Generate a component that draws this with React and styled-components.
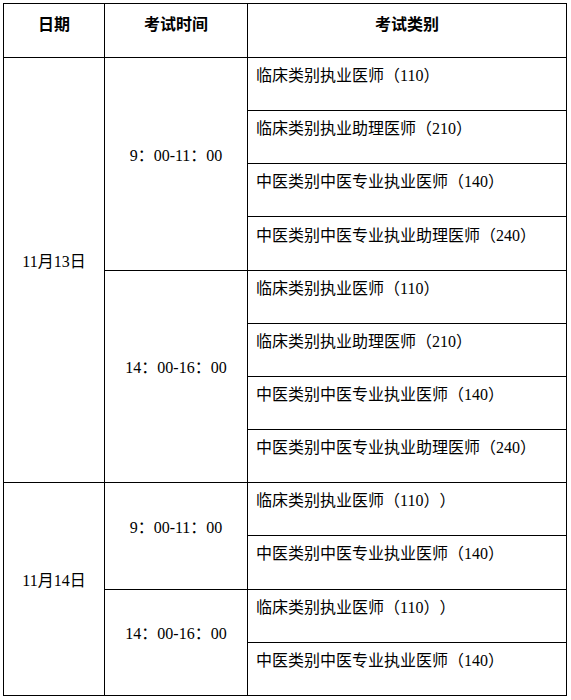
import React from 'react';
import styled, { createGlobalStyle } from 'styled-components';

const GlobalStyle = createGlobalStyle`
  html, body {
    margin: 0;
    padding: 0;
    background: #ffffff;
  }
`;

const sessions = [
  {
    date: '11月13日',
    slots: [
      {
        time: '9：00-11：00',
        items: ['临床类别执业医师（110）', '临床类别执业助理医师（210）', '中医类别中医专业执业医师（140）', '中医类别中医专业执业助理医师（240）'],
      },
      {
        time: '14：00-16：00',
        items: ['临床类别执业医师（110）', '临床类别执业助理医师（210）', '中医类别中医专业执业医师（140）', '中医类别中医专业执业助理医师（240）'],
      },
    ],
  },
  {
    date: '11月14日',
    slots: [
      { time: '9：00-11：00', items: ['临床类别执业医师（110））', '中医类别中医专业执业医师（140）'] },
      { time: '14：00-16：00', items: ['临床类别执业医师（110））', '中医类别中医专业执业医师（140）'] },
    ],
  },
];

const Page = styled.div`
  padding: 3px 0 0 3px;
`;

const Table = styled.table`
  border-collapse: collapse;
  table-layout: fixed;
  width: 563px;
  color: #000;
  font-family: "Liberation Serif", "Noto Sans CJK SC", serif;
  font-size: 16px;
  text-spacing-trim: space-all;
`;

const HeadRow = styled.tr`
  height: 54px;
`;

const BodyRow = styled.tr`
  height: 53.17px;
`;

const HeadCell = styled.th`
  border: 1px solid #000;
  padding: 0 0 16px 0;
  vertical-align: middle;
  text-align: center;
  font-family: "Noto Sans CJK SC", "Liberation Sans", sans-serif;
  font-weight: bold;
  font-size: 16px;
  line-height: 20px;
`;

const Cell = styled.td`
  border: 1px solid #000;
  padding: ${p => (p.$center ? '0 0 16px 0' : '0 4px 16px 8px')};
  vertical-align: middle;
  text-align: ${p => (p.$center ? 'center' : 'left')};
  line-height: 20px;
  white-space: nowrap;
  text-spacing-trim: space-all;
`;

export default function App() {
  const rows = [];
  sessions.forEach((s, si) => {
    const dateSpan = s.slots.reduce((n, sl) => n + sl.items.length, 0);
    s.slots.forEach((sl, ti) => {
      sl.items.forEach((item, ii) => {
        rows.push(
          <BodyRow key={`${si}-${ti}-${ii}`}>
            {ti === 0 && ii === 0 && (
              <Cell $center rowSpan={dateSpan}>{s.date}</Cell>
            )}
            {ii === 0 && (
              <Cell $center rowSpan={sl.items.length}>{sl.time}</Cell>
            )}
            <Cell>{item}</Cell>
          </BodyRow>
        );
      });
    });
  });

  return (
    <Page>
      <GlobalStyle />
      <Table>
        <colgroup>
          <col style={{ width: 101 }} />
          <col style={{ width: 143 }} />
          <col style={{ width: 319 }} />
        </colgroup>
        <thead>
          <HeadRow>
            <HeadCell>日期</HeadCell>
            <HeadCell>考试时间</HeadCell>
            <HeadCell>考试类别</HeadCell>
          </HeadRow>
        </thead>
        <tbody>{rows}</tbody>
      </Table>
    </Page>
  );
}
